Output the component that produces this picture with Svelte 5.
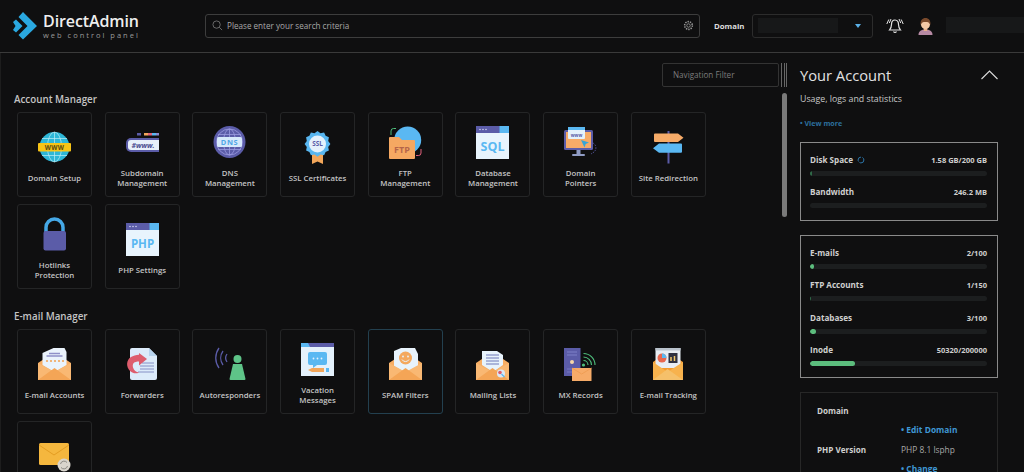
<script>
  const groups = [
    { title: 'Account Manager', items: [
      { icon: 'globe', label: 'Domain Setup' },
      { icon: 'sub', label: 'Subdomain\nManagement' },
      { icon: 'dns', label: 'DNS\nManagement' },
      { icon: 'ssl', label: 'SSL Certificates' },
      { icon: 'ftp', label: 'FTP\nManagement' },
      { icon: 'sql', label: 'Database\nManagement' },
      { icon: 'pointer', label: 'Domain\nPointers' },
      { icon: 'sign', label: 'Site Redirection' },
      { icon: 'lock', label: 'Hotlinks\nProtection' },
      { icon: 'php', label: 'PHP Settings' }
    ]},
    { title: 'E-mail Manager', items: [
      { icon: 'mail', label: 'E-mail Accounts' },
      { icon: 'forward', label: 'Forwarders' },
      { icon: 'auto', label: 'Autoresponders' },
      { icon: 'vacation', label: 'Vacation\nMessages' },
      { icon: 'spam', label: 'SPAM Filters', active: true },
      { icon: 'list', label: 'Mailing Lists' },
      { icon: 'mx', label: 'MX Records' },
      { icon: 'track', label: 'E-mail Tracking' },
      { icon: 'usage', label: 'E-mail Usage' }
    ]}
  ];
  const usage = [
    { label: 'Disk Space', value: '1.58 GB/200 GB', pct: 1, spin: true, dim: true },
    { label: 'Bandwidth', value: '246.2 MB', pct: 0 }
  ];
  const limits = [
    { label: 'E-mails', value: '2/100', pct: 2.5 },
    { label: 'FTP Accounts', value: '1/150', pct: 0.7, dim: true },
    { label: 'Databases', value: '3/100', pct: 3.5 },
    { label: 'Inode', value: '50320/200000', pct: 25.2 }
  ];
</script>

{#snippet envelope()}
  <path d="M0 15 16.5 4 33 15v17H0z" fill="#f7ad63"/>
{/snippet}
{#snippet envFront()}
  <path d="M0 15 16.5 24 33 15v17H0z" fill="#f9b873"/>
  <path d="M0 32 16.5 20 33 32z" fill="#f4a556"/>
{/snippet}
{#snippet windowFrame()}
  <rect width="33" height="33" fill="#e8f4fd"/>
  <rect width="33" height="7" fill="#5b5ca8"/>
  <rect x="23.5" width="9.5" height="7" fill="#5ab8f2"/>
  <circle cx="4" cy="3.5" r=".8" fill="#cfd0f0"/><circle cx="7" cy="3.5" r=".8" fill="#cfd0f0"/><circle cx="10" cy="3.5" r=".8" fill="#cfd0f0"/>
{/snippet}

{#snippet icon(name)}
  <svg class="ico" viewBox="0 0 33 33" aria-hidden="true">
    {#if name === 'globe'}
      <circle cx="16.5" cy="16" r="15" fill="#2db7d8"/>
      <g fill="none" stroke="#bdeef7" stroke-width=".7"><ellipse cx="16.5" cy="16" rx="7" ry="15"/><path d="M16.5 1v30M4 7.5h25M4 24.5h25"/></g>
      <rect y="12" width="33" height="8.5" rx="1" fill="#f7c416"/>
      <text class="svgt" x="16.5" y="18.600" font-size="6.400" fill="#5a4a10" letter-spacing=".4">WWW</text>
    {:else if name === 'sub'}
      <rect x="11" y="7" width="4" height="2.5" fill="#5b5ca8"/><rect x="18" y="7" width="4" height="2.5" fill="#f2a65a"/><rect x="22" y="7" width="4" height="2.5" fill="#e0607a"/><rect x="26" y="7" width="4" height="2.5" fill="#5ab8f2"/><rect x="30" y="7" width="3" height="2.5" fill="#8a8bd0"/>
      <path d="M5 12h28v14H5a5 5 0 0 1-5-5v-4a5 5 0 0 1 5-5z" fill="#5b5ca8"/>
      <path d="M5 14h28v10H5a3 3 0 0 1-3-3v-4a3 3 0 0 1 3-3z" fill="#e8f0fb"/>
      <text class="svgt" x="17" y="21.5" font-size="7" font-style="italic" fill="#4a4b90">#www.</text>
    {:else if name === 'dns'}
      <circle cx="16.5" cy="16" r="16" fill="#5b5ca8"/>
      <g fill="none" stroke="#9a9be0" stroke-width=".8"><circle cx="16.5" cy="16" r="13"/><ellipse cx="16.5" cy="16" rx="6" ry="13"/><path d="M16.5 3v26M5 8.5h23M5 23.5h23"/></g>
      <rect x="4" y="11" width="25" height="10" rx="1.5" fill="#d6e9fb"/>
      <text class="svgt" x="16.5" y="19" font-size="7.400" fill="#4fa6e6" letter-spacing=".6">DNS</text>
    {:else if name === 'ssl'}
      <path d="M11 20h11v13l-5.500-2.500L11 33z" fill="#f2a65a"/>
      <path d="M16.500 0l3 2.200 3.600-.7 1.500 3.300 3.300 1.500-.7 3.600 2.200 3-2.200 3 .7 3.600-3.300 1.500-1.500 3.300-3.600-.7-3 2.200-3-2.200-3.600.7-1.500-3.300-3.300-1.500.7-3.600-2.200-3 2.200-3-.7-3.600 3.300-1.500 1.500-3.300 3.600.7z" fill="#58b6f0"/>
      <circle cx="16.500" cy="12.900" r="8.500" fill="#e4f1fc"/>
      <text class="svgt" x="16.500" y="15.300" font-size="6.400" fill="#5b5ca8">SSL</text>
    {:else if name === 'ftp'}
      <circle cx="18.700" cy="14" r="13.500" fill="#5ab8f2"/>
      <path d="M1 11h9l3 3h12a1 1 0 0 1 1 1v17a1 1 0 0 1-1 1H1a1 1 0 0 1-1-1V12a1 1 0 0 1 1-1z" fill="#f5a862"/>
      <text class="svgt" x="13" y="27" font-size="9" fill="#b5654a">FTP</text>
      <path d="M2 9V5a2.500 2.500 0 0 1 2.500-2.500H7" fill="none" stroke="#4fbf7d" stroke-width="1"/>
      <path d="M32 23v4a2.500 2.500 0 0 1-2.500 2.500H27" fill="none" stroke="#e0607a" stroke-width="1"/>
    {:else if name === 'sql'}
      {@render windowFrame()}
      <text class="svgt" x="16.500" y="25" font-size="12.500" fill="#5ab8f2">SQL</text>
    {:else if name === 'php'}
      {@render windowFrame()}
      <text class="svgt" x="16.500" y="24.500" font-size="11.500" fill="#5ab8f2">PHP</text>
    {:else if name === 'pointer'}
      <rect y="4" width="29" height="20" rx="1.500" fill="#5b5ca8"/>
      <rect x="2" y="6" width="25" height="16" fill="#f6ab68"/>
      <rect x="4" y="1" width="17" height="12" rx="1" fill="#e4f1fc"/>
      <rect x="4" y="1" width="17" height="3" fill="#5ab8f2"/>
      <text class="svgt" x="12.500" y="10.500" font-size="4.500" fill="#5b5ca8">www</text>
      <path d="M17 14l8 2.500-3.300 1.500-1.200 3.500z" fill="#36a5d8"/>
      <rect x="12.500" y="24" width="4" height="4" fill="#8f9bc4"/>
      <rect x="8" y="28" width="13" height="2" rx="1" fill="#8f9bc4"/>
      <path d="M29 17a5.500 5.500 0 0 1 1 9l-3 2" fill="none" stroke="#5b5ca8" stroke-width=".9" stroke-dasharray="1.400 1.200"/>
    {:else if name === 'sign'}
      <rect x="15.500" width="2" height="32.500" fill="#5b5ca8"/>
      <path d="M3 2.500h23l5.500 4.300-5.500 4.300H3a1 1 0 0 1-1-1V3.500a1 1 0 0 1 1-1z" fill="#f6ab68"/>
      <path d="M29 12.500H7L1 17.200l6 4.600h22a1 1 0 0 0 1-1v-7.300a1 1 0 0 0-1-1z" fill="#5ab8f2"/>
    {:else if name === 'lock'}
      <path d="M8 15V9.500a8.500 8.500 0 0 1 17 0V15" fill="none" stroke="#45a8e6" stroke-width="3.500"/>
      <rect x="5.500" y="13" width="22.500" height="19.500" rx="2" fill="#5b5ca8"/>
    {:else if name === 'mail'}
      {@render envelope()}
      <path d="M5 17V5l11-5h11l2 4v13l-12 7z" fill="#eaf3fc" transform="translate(-.5 0)"/>
      <path d="M11 5.500h11M8.500 8h16" stroke="#8f90c8" stroke-width="1.300"/>
      <g fill="#f2a65a"><circle cx="9" cy="13" r="1.100"/><circle cx="13" cy="13" r="1.100"/><circle cx="17" cy="13" r="1.100"/><circle cx="21" cy="13" r="1.100"/><circle cx="25" cy="13" r="1.100"/></g>
      {@render envFront()}
    {:else if name === 'forward'}
      <path d="M2 0h17l8 8v22a2 2 0 0 1-2 2H2a2 2 0 0 1-2-2V2a2 2 0 0 1 2-2z" transform="translate(4 0)" fill="#dcebfa"/>
      <path d="M23 0l8 8h-8z" fill="#b7d3ee"/>
      <path d="M16 15h12M14 18h14M14 21h14M12 24h16" stroke="#7c86c0" stroke-width=".9"/>
      <path d="M13 5l8 6-8 6.500v-4c-5 0-7 2-6 6 1 3 3 4.500 6 5-3 1.500-6 1-9-1.500-4-4-4-11 1-14 2-1.200 5-2 8-2.200z" fill="#dd5d6d"/>
    {:else if name === 'auto'}
      <g fill="none" stroke="#5b5ca8" stroke-width="1.300"><path d="M6 0a17 17 0 0 0 0 20"/><path d="M10 3a12 12 0 0 0 0 14"/><path d="M14 6a7 7 0 0 0 0 8"/></g>
      <circle cx="24.500" cy="11" r="4" fill="#5ec488"/>
      <path d="M20 16h9l3.500 15a1 1 0 0 1-1 1H17.500a1 1 0 0 1-1-1z" fill="#5ec488"/>
    {:else if name === 'vacation'}
      <rect width="33" height="33" fill="#e4f1fc"/>
      <rect width="33" height="4" fill="#5b5ca8"/>
      <path d="M0 0h7l2 4H0z" fill="#5ab8f2"/>
      <path d="M9 9h15a2 2 0 0 1 2 2v9a2 2 0 0 1-2 2h-8l-4 3v-3H9a2 2 0 0 1-2-2v-9a2 2 0 0 1 2-2z" fill="#5ab8f2"/>
      <g fill="#e4f1fc"><circle cx="12.500" cy="15.500" r=".9"/><circle cx="16.500" cy="15.500" r=".9"/><circle cx="20.500" cy="15.500" r=".9"/></g>
      <path d="M7 27l4-2h12v4H11z" fill="#f2a65a"/><rect x="25" y="25" width="3" height="4" fill="#5ab8f2"/>
    {:else if name === 'spam'}
      {@render envelope()}
      <path d="M5 18V3l7-3h14l3 6v12l-12 7z" fill="#e8f3fc"/>
      <circle cx="16.500" cy="10" r="6.500" fill="#f4a85e"/>
      <circle cx="14" cy="8.500" r=".9" fill="#e8f3fc"/><circle cx="19" cy="8.500" r=".9" fill="#e8f3fc"/>
      <path d="M13 11.500a4 4 0 0 0 7 0" fill="none" stroke="#e8f3fc" stroke-width="1"/>
      {@render envFront()}
    {:else if name === 'list'}
      {@render envelope()}
      <path d="M6 17V3h15l6 4v10l-10 7z" fill="#e8f3fc"/>
      <path d="M10 7h13M10 10h13M10 13h13M10 16h13" stroke="#6f78b8" stroke-width="1"/>
      {@render envFront()}
      <circle cx="25" cy="25.500" r="4" fill="#dce8f6"/><circle cx="24" cy="24.500" r="1.800" fill="#dd5d6d"/>
      <path d="M25.500 26l3 3" stroke="#5ab8f2" stroke-width="1.300"/>
    {:else if name === 'mx'}
      <rect x="0" width="16.500" height="28" fill="#5b5ca8"/>
      <path d="M3 4h10M3 7h10" stroke="#7f80c8" stroke-width="1"/>
      <circle cx="8" cy="14" r="2" fill="#f6d7a8"/>
      <path d="M3 21h10M3 24h10" stroke="#7f80c8" stroke-width=".8"/>
      <rect x="8" y="20" width="19.500" height="13" fill="#f6ab68"/>
      <path d="M8 20l9.700 6 9.800-6" fill="none" stroke="#ee9a50" stroke-width=".8"/>
      <circle cx="19.500" cy="17" r="1.600" fill="#4fbf7d"/>
      <g fill="none" stroke="#4fbf7d" stroke-width="1.100"><path d="M19.500 12.500a4.500 4.500 0 0 1 4.500 4.500"/><path d="M19.500 9a8 8 0 0 1 8 8"/><path d="M19.500 5.500a11.500 11.500 0 0 1 11.500 11.500"/></g>
    {:else if name === 'track'}
      <path d="M1 14 15.500 4 31 14v18H1z" fill="#f39a2e"/>
      <rect x="3.500" y="0" width="25" height="20" fill="#e8edf3"/>
      <rect x="3.500" y="0" width="25" height="2.500" fill="#b9c2cc"/>
      <circle cx="10" cy="10" r="4.500" fill="#e8674f"/><path d="M10 10V5.500a4.500 4.500 0 0 1 4.500 4.500z" fill="#5ab8f2"/>
      <rect x="16.500" y="5" width="9" height="10" fill="#2f3140"/><path d="M19 13v-4M22.500 13V8" stroke="#f4c96a" stroke-width="1.500"/>
      <path d="M1 14 15.500 24 31 14v18H1z" fill="#f7b24d"/>
      <path d="M1 32 15.500 21 31 32z" fill="#f5c06a"/>
    {:else if name === 'usage'}
      <rect x="1" y="3" width="30" height="22" rx="1.500" fill="#f5b73e"/>
      <path d="M1 5l15 10L31 5" fill="none" stroke="#e49d22" stroke-width="1"/>
      <circle cx="26" cy="25" r="6.500" fill="#d9d5cd"/>
      <path d="M22.500 24a3.700 3.700 0 0 1 6.500-1.500M29.500 26a3.700 3.700 0 0 1-6.500 1.500" fill="none" stroke="#8c8a84" stroke-width="1"/>
    {/if}
  </svg>
{/snippet}

{#snippet stat(row)}
  <div class="stat">
    <div class="stat-head">
      <span class="stat-label">{row.label}{#if row.spin}<svg class="spin" viewBox="0 0 8 8" aria-hidden="true"><circle cx="4" cy="4" r="2.900" fill="none" stroke="#2f7fb8" stroke-width=".9" stroke-dasharray="6 1.400"/></svg>{/if}</span>
      <span>{row.value}</span>
    </div>
    <div class="track"><div class="fill" class:dim={row.dim} style:width="{row.pct}%"></div></div>
  </div>
{/snippet}

<div class="page">
  <header>
    <div class="brand">
      <svg class="logo" viewBox="0 0 24 28" aria-hidden="true">
        <path d="M10 0l14 14-14 13.500-4.500-4.500L14.500 14 5.500 5z" fill="#2aa8e0"/>
        <path d="M3 7.500l6.500 6.500-6.500 6.500-3-2.500 2.500-4-2.500-4z" fill="#2aa8e0"/>
      </svg>
      <div class="brand-text">
        <div class="brand-name">DirectAdmin</div>
        <div class="brand-sub">web control panel</div>
      </div>
    </div>
    <div class="search">
      <svg class="search-ico" viewBox="0 0 12 12" aria-hidden="true"><circle cx="5" cy="5" r="4" fill="none" stroke="#888" stroke-width=".8"/><path d="M8 8l3 3" stroke="#888" stroke-width=".8"/></svg>
      <span class="search-text">Please enter your search criteria</span>
      <svg class="gear" viewBox="0 0 12 12" aria-hidden="true"><circle cx="6" cy="6" r="1.900" fill="none" stroke="#999" stroke-width=".9"/><circle cx="6" cy="6" r="4.200" fill="none" stroke="#999" stroke-width="1.700" stroke-dasharray="1.500 1.100"/></svg>
    </div>
    <span class="domain-label">Domain</span>
    <div class="select"><span class="masked"></span><span class="caret"></span></div>
    <svg class="bell" viewBox="0 0 18 16" aria-hidden="true">
      <path d="M9 2c-2.500 0-3.500 2-3.500 4.500 0 2.200-.8 4-2 5.500h11c-1.200-1.500-2-3.300-2-5.500C12.500 4 11.500 2 9 2z" fill="none" stroke="#e4e4e4" stroke-width="1.200"/>
      <path d="M7.500 13.500a1.700 1.700 0 0 0 3 0" fill="none" stroke="#e4e4e4" stroke-width="1.100"/>
      <path d="M2.800 1.500.8 6M5 1 3.300 5M15.200 1.500l2 4.500M13 1l1.700 4" stroke="#e4e4e4" stroke-width="1" fill="none"/>
    </svg>
    <svg class="avatar" viewBox="0 0 15 17" aria-hidden="true">
      <path d="M.5 17c0-4 3-5.500 7-5.500s7 1.500 7 5.500z" fill="#b78aa4"/>
      <rect x="5.800" y="9" width="3.400" height="4" fill="#eab28c"/>
      <circle cx="7.500" cy="6.500" r="4.500" fill="#f4c9a6"/>
      <path d="M2.600 7C2 2.500 4.500 0 7.500 0s5.500 2.500 4.900 7c-1-2.500-2.300-3-4.900-3S3.600 4.500 2.600 7z" fill="#7a4a2c"/>
    </svg>
    <span class="masked user"></span>
  </header>

  <div class="body">
    <main>
      <div class="filter-row">
        <div class="filter">Navigation Filter</div>
      </div>
      {#each groups as group}
        <h2>{group.title}</h2>
        <div class="grid">
          {#each group.items as item}
            <div class="card" class:active={item.active}>
              {@render icon(item.icon)}
              <div class="label">{item.label}</div>
            </div>
          {/each}
        </div>
      {/each}
    </main>

    <div class="rail">
      <div class="grip"></div>
      <div class="thumb"></div>
    </div>

    <aside>
      <div class="acct-head">
        <span class="acct-title">Your Account</span>
        <svg class="chev" viewBox="0 0 17 10" aria-hidden="true"><path d="M.5 9 8.500 1l8 8" fill="none" stroke="#ddd" stroke-width="1.100"/></svg>
      </div>
      <p class="acct-sub">Usage, logs and statistics</p>
      <div class="more">• View more</div>
      <section class="box">
        {#each usage as row}{@render stat(row)}{/each}
      </section>
      <section class="box">
        {#each limits as row}{@render stat(row)}{/each}
      </section>
      <section class="box info">
        <div class="info-key first">Domain</div>
        <div class="info-val link">• Edit Domain</div>
        <div class="info-line"><span class="info-key">PHP Version</span><span class="info-val">PHP 8.1 lsphp</span></div>
        <div class="info-val link">• Change</div>
      </section>
    </aside>
  </div>
</div>

<style>
  :global(body) { margin: 0; background: #0f0f10; }
  .page {
    width: 1024px; height: 472px; overflow: hidden; background: #0f0f10; color: #c9c9c9;
    font-family: "Open Sans", "Liberation Sans", sans-serif;
  }
  header {
    height: 53px; box-sizing: border-box; border-bottom: 1px solid #3a3a3a;
    display: flex; align-items: center;
  }
  .brand { display: flex; align-items: center; width: 205px; padding-left: 13px; box-sizing: border-box; flex: none; }
  .logo { width: 24px; height: 28px; flex: none; }
  .brand-text { margin-left: 6px; }
  .brand-name { font-size: 16px; font-weight: 600; color: #eee; line-height: 19px; letter-spacing: -.1px; }
  .brand-sub { font-size: 7.500px; color: #9a9a9a; letter-spacing: 2px; line-height: 9px; }
  .search {
    width: 495px; height: 24px; flex: none; box-sizing: border-box; border: 1px solid #3d3d3d; border-radius: 3px;
    display: flex; align-items: center; padding: 0 5px 0 6px; margin-top: -1px;
  }
  .search-ico { width: 11px; height: 11px; margin-right: 4px; }
  .search-text { flex: 1; font-size: 8.150px; color: #a8a8a8; }
  .gear { width: 11px; height: 11px; }
  .domain-label { margin-left: 14px; width: 38px; flex: none; font-size: 7.800px; font-weight: 700; color: #ddd; margin-top: -1px; }
  .select {
    width: 121px; height: 24px; flex: none; box-sizing: border-box; border: 1px solid #2c2c2c; border-radius: 3px;
    display: flex; align-items: center; padding-left: 5px; margin-top: -1px;
  }
  .masked { display: block; width: 80px; height: 15px; background: #171819; }
  .caret {
    margin-left: 17px; width: 0; height: 0;
    border-left: 3.500px solid transparent; border-right: 3.500px solid transparent; border-top: 4px solid #5ab0e8;
  }
  .bell { width: 18px; height: 16px; margin-left: 13px; flex: none; margin-top: -1px; }
  .avatar { width: 15px; height: 17px; margin-left: 14px; flex: none; margin-top: 1px; }
  .user { width: 78px; height: 16px; margin-left: 13px; flex: none; margin-top: -2px; }

  .body { display: flex; height: 419px; }
  main { width: 780px; flex: none; box-sizing: border-box; border-left: 1px solid #1d1d1d; padding: 10px 0 0 13px; }
  .filter-row { display: flex; justify-content: flex-end; padding-right: 1px; }
  .filter {
    width: 117px; height: 24px; box-sizing: border-box; border: 1px solid #333; border-radius: 2px;
    font-size: 8.100px; color: #7c7c7c; line-height: 22px; padding-left: 10px;
  }
  h2 { margin: 0; font-size: 9.800px; font-weight: 600; color: #c4c4c4; line-height: 14px; }
  .filter-row + h2 { margin-top: 6px; }
  .grid + h2 { margin-top: 21px; }
  .grid { display: flex; flex-wrap: wrap; gap: 7px 12.700px; width: 720px; padding: 5px 0 0 3px; box-sizing: border-box; }
  .card {
    width: 75px; height: 85px; box-sizing: border-box; border: 1px solid #242526; border-radius: 3px;
    display: flex; flex-direction: column; align-items: center; justify-content: center; padding: 5px 2px 0;
  }
  .card.active { border-color: #23404f; }
  .ico { width: 33px; height: 33px; flex: none; overflow: visible; }
  .svgt { font-family: "Open Sans", "Liberation Sans", sans-serif; font-weight: 700; text-anchor: middle; }
  .label { margin-top: 10px; font-size: 7.800px; font-weight: 600; line-height: 9.500px; text-align: center; color: #c4c4c4; white-space: pre-line; }

  .rail { width: 20px; flex: none; position: relative; }
  .grip {
    position: absolute; left: 1px; top: 10px; width: 6px; height: 24px; box-sizing: border-box;
    border-left: 1px solid #666; border-right: 1px solid #666; background: linear-gradient(#666, #666) center / 1px 100% no-repeat;
  }
  .thumb { position: absolute; left: 2px; top: 40px; width: 5px; height: 124px; border-radius: 3px; background: #7a7a7a; }

  aside { flex: 1; padding: 0 26px 0 0; box-sizing: border-box; }
  .acct-head { display: flex; justify-content: space-between; align-items: center; padding-top: 12px; height: 20px; }
  .acct-title { font-size: 14.700px; color: #e2e2e2; line-height: 20px; }
  .chev { width: 17px; height: 10px; }
  .acct-sub { margin: 8px 0 0; font-size: 8.800px; line-height: 13px; color: #c8c8c8; }
  .more { margin-top: 11px; font-size: 7.100px; font-weight: 700; color: #2c6f9e; line-height: 12px; }
  .box {
    border: 1px solid #8a8a8a; padding: 11px 10px 0 9px; box-sizing: border-box; margin-bottom: 14px; height: 79px; margin-top: 0;
  }
  .more + .box { margin-top: 13px; }
  .box + .box { height: 143px; }
  .stat { height: 32.400px; }
  .stat-head { display: flex; justify-content: space-between; align-items: center; font-size: 7.500px; font-weight: 700; color: #cfcfcf; line-height: 12px; }
  .stat-label { display: flex; align-items: center; font-size: 8.100px; }
  .spin { width: 8px; height: 8px; margin-left: 4px; }
  .track { height: 5px; margin-top: 5px; background: #1c1e1f; border-radius: 3px; overflow: hidden; }
  .fill { height: 100%; background: #5cbd7d; border-radius: 3px; }
  .fill.dim { background: #2f6a48; }
  .box.info { height: 120px; border-color: #272727; padding: 11px 16px; margin-bottom: 0; }
  .info-key { font-size: 8.100px; font-weight: 700; color: #cfcfcf; width: 84px; flex: none; display: block; }
  .info-key.first { line-height: 13px; }
  .info-line { display: flex; align-items: center; line-height: 13px; margin-top: 7px; }
  .info-val { font-size: 8.400px; color: #a8a8a8; }
  .link { color: #3f97d4; font-weight: 700; padding-left: 84px; line-height: 13px; }
  .link:nth-child(2) { margin-top: 6px; }
  .info-line + .link { margin-top: 6px; }
</style>
